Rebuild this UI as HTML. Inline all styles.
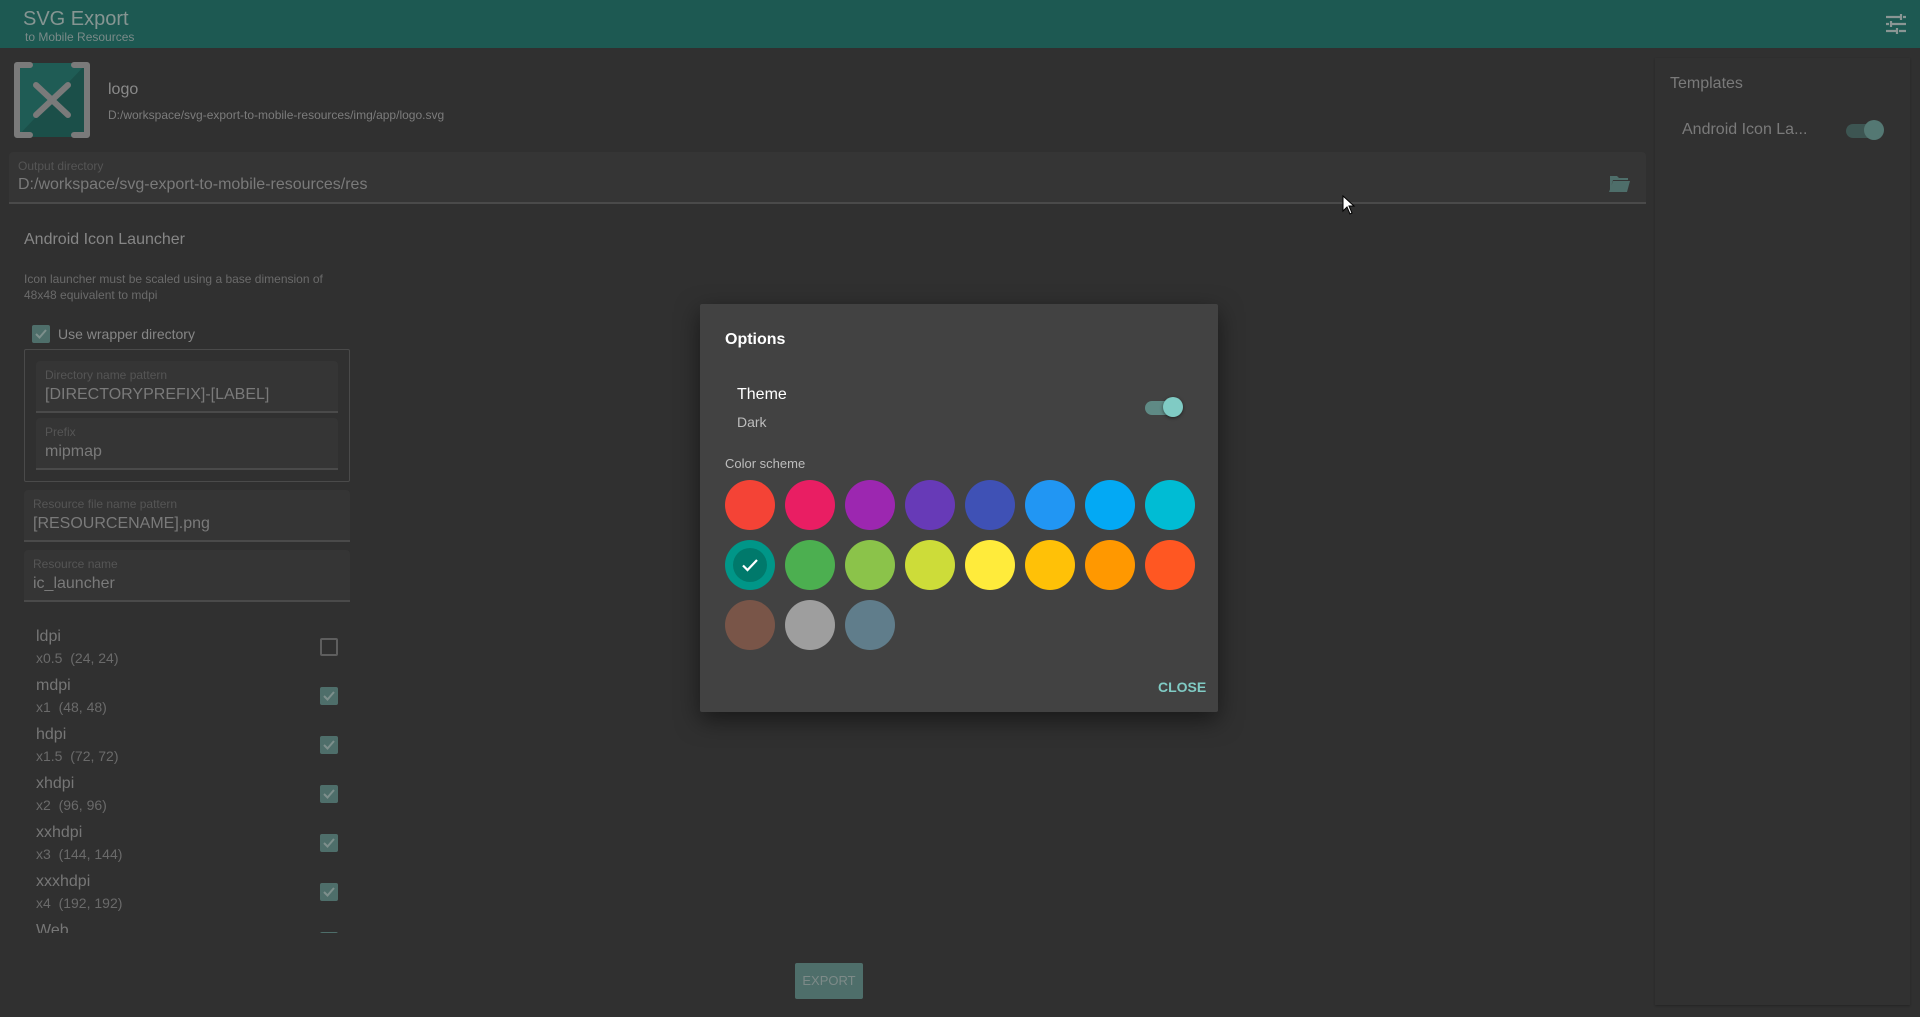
<!DOCTYPE html>
<html><head><meta charset="utf-8"><style>
*{margin:0;padding:0;box-sizing:border-box}
body{width:1920px;height:1017px;background:#303030;font-family:"Liberation Sans",sans-serif;position:relative;overflow:hidden}
.a{position:absolute;white-space:nowrap}
.field{position:absolute;background:#353535;border-bottom:2px solid #4a4a4a;border-radius:4px 4px 0 0}
.field .l{position:absolute;left:9px;top:7px;font-size:12px;color:#555}
.field .v{position:absolute;left:9px;top:25px;font-size:16px;color:#7a7a7a}
.cb{position:absolute;width:18px;height:18px;border-radius:2px;background:#4e6e6a}
.cb svg{position:absolute;left:2px;top:2px}
.row .n{font-size:16px;color:#767676}
.row .s{font-size:14px;color:#6a6a6a;margin-top:4px}
.c{position:absolute;width:50px;height:50px;border-radius:50%}
</style></head><body>
<div class="a" style="left:0;top:0;width:1920px;height:48px;background:#1d5952"></div>
<div class="a" style="left:23px;top:8px;font-size:20px;color:#869592">SVG Export</div>
<div class="a" style="left:25px;top:30px;font-size:12px;color:#7a8a88">to Mobile Resources</div>
<svg class="a" style="left:1885px;top:14px" width="22" height="20" viewBox="0 0 22 20"><g stroke="#8a9694" stroke-width="2.2"><path d="M1 3h14M18 3h3M16 0v6M1 10h3M7 10h14M6 7v6M1 17h10M14 17h7M12 14v6"/></g></svg>

<svg class="a" style="left:12px;top:60px" width="80" height="80" viewBox="0 0 80 80">
<rect x="5" y="3" width="70" height="74" fill="#1f5c55"/><path d="M75 3V77H5Z" fill="#1b4f49"/>
<path d="M18 5H5V75H18M62 5H75V75H62" fill="none" stroke="#7a7a7a" stroke-width="6" stroke-linejoin="round" stroke-linecap="round"/>
<path d="M24 25L56 55M56 25L24 55" stroke="#7a7a7a" stroke-width="6" stroke-linecap="round"/></svg>
<div class="a" style="left:108px;top:81px;font-size:16px;color:#8a8a8a">logo</div>
<div class="a" style="left:108px;top:108px;font-size:12px;color:#7c7c7c">D:/workspace/svg-export-to-mobile-resources/img/app/logo.svg</div>

<div class="field" style="left:9px;top:152px;width:1637px;height:52px"><div class="l">Output directory</div><div class="v" style="top:24px">D:/workspace/svg-export-to-mobile-resources/res</div></div>
<svg class="a" style="left:1608px;top:175px" width="22" height="18" viewBox="0 0 22 18"><path d="M2 1h7l2 2h9v2H5L2 15ZM5 6h17l-3 11H1Z" fill="#4e6e6a"/></svg>
<svg class="a" style="left:1342px;top:195px" width="14" height="20" viewBox="0 0 14 20"><path d="M1 1V16L5 12L8 19L10 18L7 11H12Z" fill="#fff" stroke="#000" stroke-width="1"/></svg>

<div class="a" style="left:1655px;top:58px;width:255px;height:947px;background:#313131;box-shadow:0 1px 2px rgba(0,0,0,.25)"></div>
<div class="a" style="left:1670px;top:75px;font-size:16px;color:#7a7a7a">Templates</div>
<div class="a" style="left:1682px;top:121px;font-size:16px;color:#7a7a7a">Android Icon La...</div>
<div class="a" style="left:1846px;top:124px;width:34px;height:14px;border-radius:7px;background:#3d5552"></div>
<div class="a" style="left:1864px;top:120px;width:20px;height:20px;border-radius:50%;background:#547873"></div>

<div class="a" style="left:24px;top:231px;font-size:16px;color:#868686">Android Icon Launcher</div>
<div class="a" style="left:24px;top:271px;font-size:12px;line-height:16px;color:#6a6a6a">Icon launcher must be scaled using a base dimension of<br>48x48 equivalent to mdpi</div>
<div class="cb" style="left:32px;top:325px"><svg width="14" height="14" viewBox="0 0 14 14"><path d="M2 7l3.5 3.5L12 3" fill="none" stroke="#7d8f8c" stroke-width="2"/></svg></div>
<div class="a" style="left:58px;top:326px;font-size:14px;color:#868686">Use wrapper directory</div>
<div class="a" style="left:24px;top:349px;width:326px;height:133px;border:1px solid #4a4a4a;border-radius:2px"></div>
<div class="field" style="left:36px;top:361px;width:302px;height:52px"><div class="l">Directory name pattern</div><div class="v">[DIRECTORYPREFIX]-[LABEL]</div></div>
<div class="field" style="left:36px;top:418px;width:302px;height:52px"><div class="l">Prefix</div><div class="v">mipmap</div></div>
<div class="field" style="left:24px;top:490px;width:326px;height:52px"><div class="l">Resource file name pattern</div><div class="v">[RESOURCENAME].png</div></div>
<div class="field" style="left:24px;top:550px;width:326px;height:52px"><div class="l">Resource name</div><div class="v">ic_launcher</div></div>

<div class="a" style="left:0;top:620px;width:360px;height:313px;overflow:hidden">
<div class="a row" style="left:36px;top:8px"><div class="n">ldpi</div><div class="s">x0.5 &nbsp;(24, 24)</div></div>
<div class="a" style="left:320px;top:18px;width:18px;height:18px;border:2px solid #5e5e5e;border-radius:2px"></div>
<div class="a row" style="left:36px;top:57px"><div class="n">mdpi</div><div class="s">x1 &nbsp;(48, 48)</div></div>
<div class="cb" style="left:320px;top:67px"><svg width="14" height="14" viewBox="0 0 14 14"><path d="M2 7l3.5 3.5L12 3" fill="none" stroke="#7d8f8c" stroke-width="2"/></svg></div>
<div class="a row" style="left:36px;top:106px"><div class="n">hdpi</div><div class="s">x1.5 &nbsp;(72, 72)</div></div>
<div class="cb" style="left:320px;top:116px"><svg width="14" height="14" viewBox="0 0 14 14"><path d="M2 7l3.5 3.5L12 3" fill="none" stroke="#7d8f8c" stroke-width="2"/></svg></div>
<div class="a row" style="left:36px;top:155px"><div class="n">xhdpi</div><div class="s">x2 &nbsp;(96, 96)</div></div>
<div class="cb" style="left:320px;top:165px"><svg width="14" height="14" viewBox="0 0 14 14"><path d="M2 7l3.5 3.5L12 3" fill="none" stroke="#7d8f8c" stroke-width="2"/></svg></div>
<div class="a row" style="left:36px;top:204px"><div class="n">xxhdpi</div><div class="s">x3 &nbsp;(144, 144)</div></div>
<div class="cb" style="left:320px;top:214px"><svg width="14" height="14" viewBox="0 0 14 14"><path d="M2 7l3.5 3.5L12 3" fill="none" stroke="#7d8f8c" stroke-width="2"/></svg></div>
<div class="a row" style="left:36px;top:253px"><div class="n">xxxhdpi</div><div class="s">x4 &nbsp;(192, 192)</div></div>
<div class="cb" style="left:320px;top:263px"><svg width="14" height="14" viewBox="0 0 14 14"><path d="M2 7l3.5 3.5L12 3" fill="none" stroke="#7d8f8c" stroke-width="2"/></svg></div>
<div class="a row" style="left:36px;top:302px"><div class="n">Web</div></div>
<div class="cb" style="left:320px;top:312px"></div>
</div>

<div class="a" style="left:795px;top:963px;width:68px;height:36px;background:#4e6e6a;border-radius:2px;font-size:13px;color:#7d8a88;text-align:center;line-height:36px">EXPORT</div>

<div class="a" style="left:700px;top:304px;width:518px;height:408px;background:#424242;border-radius:2px;box-shadow:0 8px 24px rgba(0,0,0,.5)"></div>
<div class="a" style="left:725px;top:331px;font-size:16px;font-weight:bold;color:#fff">Options</div>
<div class="a" style="left:737px;top:386px;font-size:16px;color:#fff">Theme</div>
<div class="a" style="left:737px;top:414px;font-size:14px;color:#bdbdbd">Dark</div>
<div class="a" style="left:1145px;top:401px;width:36px;height:14px;border-radius:7px;background:#5f8a85"></div>
<div class="a" style="left:1163px;top:397px;width:20px;height:20px;border-radius:50%;background:#80cbc4;box-shadow:0 1px 3px rgba(0,0,0,.5)"></div>
<div class="a" style="left:725px;top:456px;font-size:13px;color:#bdbdbd">Color scheme</div>

<div class="c" style="left:725px;top:480px;background:#f44336"></div>
<div class="c" style="left:785px;top:480px;background:#e91e63"></div>
<div class="c" style="left:845px;top:480px;background:#9c27b0"></div>
<div class="c" style="left:905px;top:480px;background:#673ab7"></div>
<div class="c" style="left:965px;top:480px;background:#3f51b5"></div>
<div class="c" style="left:1025px;top:480px;background:#2196f3"></div>
<div class="c" style="left:1085px;top:480px;background:#03a9f4"></div>
<div class="c" style="left:1145px;top:480px;background:#00bcd4"></div>
<div class="c" style="left:725px;top:540px;background:#009688"><div class="a" style="left:8px;top:8px;width:34px;height:34px;border-radius:50%;background:#00796b"></div><svg class="a" style="left:13px;top:13px" width="24" height="24" viewBox="0 0 24 24"><path d="M5 12.5l4.5 4.5L19 7" fill="none" stroke="#fff" stroke-width="2.2"/></svg></div>
<div class="c" style="left:785px;top:540px;background:#4caf50"></div>
<div class="c" style="left:845px;top:540px;background:#8bc34a"></div>
<div class="c" style="left:905px;top:540px;background:#cddc39"></div>
<div class="c" style="left:965px;top:540px;background:#ffeb3b"></div>
<div class="c" style="left:1025px;top:540px;background:#ffc107"></div>
<div class="c" style="left:1085px;top:540px;background:#ff9800"></div>
<div class="c" style="left:1145px;top:540px;background:#ff5722"></div>
<div class="c" style="left:725px;top:600px;background:#795548"></div>
<div class="c" style="left:785px;top:600px;background:#9e9e9e"></div>
<div class="c" style="left:845px;top:600px;background:#607d8b"></div>

<div class="a" style="left:1158px;top:679px;font-size:14px;font-weight:bold;color:#80cbc4">CLOSE</div>
</body></html>
